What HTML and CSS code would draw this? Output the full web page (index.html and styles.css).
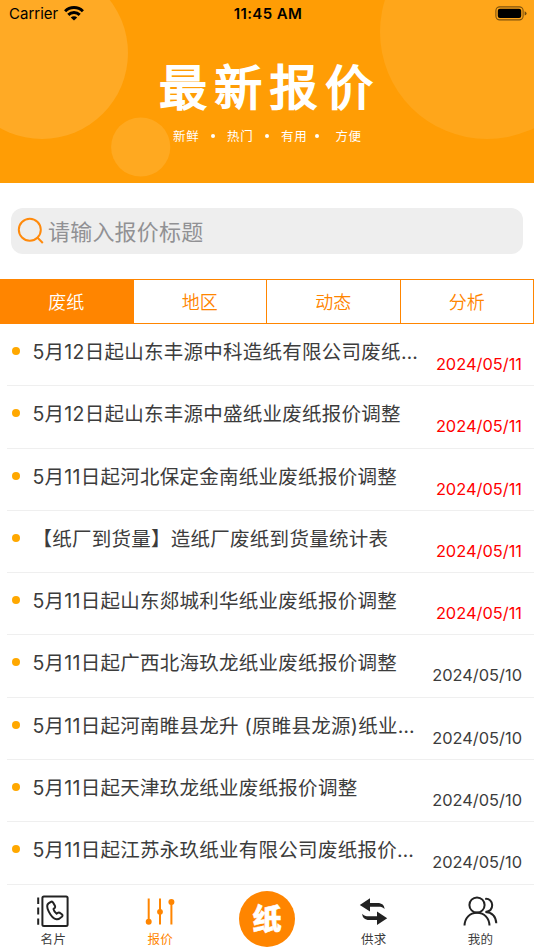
FILE: index.html
```html
<!DOCTYPE html>
<html lang="zh-CN">
<head>
    <meta charset="UTF-8">
    <meta name="viewport" content="width=device-width, initial-scale=1.0">
    <title>最新报价</title>
    <link rel="stylesheet" href="styles.css">
</head>
<body>
    <div class="page">
        <header class="banner">
            <svg class="banner-bg" width="534" height="183" viewBox="0 0 534 183">
                <circle cx="42" cy="53" r="86" fill="#ffaa25"/>
                <circle cx="487" cy="32" r="107" fill="#ffa61a"/>
                <circle cx="140.7" cy="147" r="29.6" fill="#ffa920"/>
            </svg>
            <div class="status-bar">
                <div class="carrier">
                    <span>Carrier</span>
                    <svg width="20" height="15" viewBox="0 0 20 15">
                        <g fill="none" stroke="#000" stroke-width="3">
                            <path d="M1.1 5.2a12.7 12.7 0 0 1 17.8 0"/>
                            <path d="M4.3 8.9a8.2 8.2 0 0 1 11.4 0"/>
                        </g>
                        <path d="M10 14.6l-3.2-3.1a4.6 4.6 0 0 1 6.4 0z"/>
                    </svg>
                </div>
                <div class="time">11:45 AM</div>
                <div class="battery">
                    <svg width="32" height="15" viewBox="0 0 32 15">
                        <rect x=".9" y=".9" width="27.2" height="13" rx="3.8" fill="none" stroke="#000" stroke-opacity=".5" stroke-width="1.1"/>
                        <rect x="2.8" y="2.7" width="23.4" height="9.4" rx="2"/>
                        <path d="M29.6 5.2q2 .8 2 2.2t-2 2.2z" fill-opacity=".55"/>
                    </svg>
                </div>
            </div>
            <h1>最新报价</h1>
            <div class="slogan">
                <span>新鲜</span><i></i><span>热门</span><i></i><span>有用</span><i></i><span>方便</span>
            </div>
        </header>

        <div class="search">
            <svg width="28" height="28" viewBox="0 0 28 28" fill="none" stroke="#ff8a0c" stroke-width="2">
                <circle cx="12.8" cy="12.8" r="11"/>
                <path d="M20.6 20.8l5.2 5.2"/>
            </svg>
            <span>请输入报价标题</span>
        </div>

        <nav class="tabs">
            <div class="tab active">废纸</div>
            <div class="tab">地区</div>
            <div class="tab">动态</div>
            <div class="tab">分析</div>
        </nav>

        <ul class="list">
            <li><p>5月12日起山东丰源中科造纸有限公司废纸…</p><time class="new">2024/05/11</time></li>
            <li><p>5月12日起山东丰源中盛纸业废纸报价调整</p><time class="new">2024/05/11</time></li>
            <li><p>5月11日起河北保定金南纸业废纸报价调整</p><time class="new">2024/05/11</time></li>
            <li><p>【纸厂到货量】造纸厂废纸到货量统计表</p><time class="new">2024/05/11</time></li>
            <li><p>5月11日起山东郯城利华纸业废纸报价调整</p><time class="new">2024/05/11</time></li>
            <li><p>5月11日起广西北海玖龙纸业废纸报价调整</p><time>2024/05/10</time></li>
            <li><p>5月11日起河南睢县龙升 (原睢县龙源)纸业…</p><time>2024/05/10</time></li>
            <li><p>5月11日起天津玖龙纸业废纸报价调整</p><time>2024/05/10</time></li>
            <li><p>5月11日起江苏永玖纸业有限公司废纸报价…</p><time>2024/05/10</time></li>
        </ul>

        <footer class="tabbar">
            <div class="item">
                <svg width="34" height="34" viewBox="0 0 34 34" fill="none" stroke="#222" stroke-width="2">
                    <rect x="6.4" y="2.6" width="25.2" height="29.4" rx="1.5"/>
                    <path d="M2.2 3.4v6.6M2.2 13.6v7M2.2 24.4v6.4"/>
                    <path d="M14.9 7.9l-2.4 1.5c-2 1.500-1.300 5 .3 8.200 2 4 5 7.400 7.700 7.700 2 .3 4-1.200 5.500-2.700.8-.9.6-1.700-.2-2.400l-2.300-1.600c-1.100-.6-1.900.4-2.900 1.100-1.400-.9-2.700-2.900-3.100-4.700l1.400-1.300c.5-.6.3-1.300 0-2l-1.700-3c-.6-1-1.300-1.400-2.300-.8z" stroke-linejoin="round"/>
                </svg>
                <span>名片</span>
            </div>
            <div class="item current">
                <svg width="34" height="34" viewBox="0 0 34 34" fill="#ff8500" stroke="#ff8500" stroke-width="2">
                    <path d="M5.700 4.500v24M17 4.500v26M28.400 6v24.500"/>
                    <circle cx="5.700" cy="27.700" r="2"/>
                    <circle cx="17" cy="17.800" r="1.900"/>
                    <circle cx="28.400" cy="8" r="2"/>
                </svg>
                <span>报价</span>
            </div>
            <div class="item center">
                <div class="logo">纸</div>
            </div>
            <div class="item">
                <svg width="34" height="34" viewBox="0 0 34 34" fill="#222">
                    <path d="M2.800 11L13 4.200V9h7.500c4.500 0 7 2.200 7 6-1.400-1.700-3.200-2.200-6-2.200H13v4.700z"/>
                    <path d="M30.200 24.300L20 17.600v4.700h-8.200c-3 0-5-.5-6.500-2.500 0 3.900 2.500 6.300 7 6.300H20v4.900z"/>
                </svg>
                <span>供求</span>
            </div>
            <div class="item">
                <svg width="36" height="34" viewBox="0 0 36 34" fill="none" stroke="#222" stroke-width="2">
                    <circle cx="14" cy="11" r="7.600"/>
                    <path d="M1.500 31.500c.3-7.400 5.200-12.800 12.500-12.800s12.200 5.400 12.500 12.800"/>
                    <path d="M22.200 4.900c4.200-.4 7 2.500 7 6.200 0 3.600-2.300 6.500-6.800 6.800 6.300.4 10.400 4.300 10.900 11.300"/>
                </svg>
                <span>我的</span>
            </div>
        </footer>
    </div>
</body>
</html>
```

FILE: styles.css
```css
* {
    box-sizing: border-box;
}

body {
    margin: 0;
    background: #fff;
    font-family: Inter, "Noto Sans CJK SC", sans-serif;
    color: #3c3c3c;
}

.page {
    width: 534px;
    height: 950px;
    overflow: hidden;
    display: flex;
    flex-direction: column;
}

.banner {
    position: relative;
    height: 183px;
    background: #ff9d05;
    flex: none;
}

.banner-bg {
    position: absolute;
    left: 0;
    top: 0;
}

.status-bar {
    position: relative;
    display: grid;
    grid-template-columns: 1fr auto 1fr;
    align-items: center;
    height: 27px;
    padding: 0 7px 0 9px;
    color: #000;
    font-size: 15px;
}

.carrier {
    display: flex;
    align-items: center;
    gap: 6px;
}

.time {
    font-weight: 600;
    letter-spacing: 0.4px;
}

.battery {
    display: flex;
    justify-content: flex-end;
}

.banner h1 {
    position: relative;
    margin: 32px 0 0;
    padding-left: 159px;
    font-size: 48px;
    line-height: 58px;
    font-weight: 400;
    letter-spacing: 7.3px;
    color: #fff;
    -webkit-text-stroke: 1.8px #fff;
}

.slogan {
    position: relative;
    display: flex;
    align-items: center;
    margin-top: 8px;
    padding-left: 173px;
    height: 20px;
    font-size: 12.5px;
    letter-spacing: 0.7px;
    color: #fff;
}

.slogan i {
    width: 4px;
    height: 4px;
    margin: 2px 11.8px 0;
    border-radius: 50%;
    background: #fff;
}

.slogan i:last-of-type {
    margin: 2px 16px 0 8px;
}

.search {
    display: flex;
    align-items: center;
    flex: none;
    gap: 3px;
    height: 46px;
    margin: 25px 11px 25px;
    padding-left: 6px;
    border-radius: 12px;
    background: #eee;
    color: #919194;
    font-size: 22px;
    letter-spacing: 0.2px;
}

.search span {
    margin-top: -2px;
}

.tabs {
    display: grid;
    grid-template-columns: repeat(4, 1fr);
    flex: none;
    height: 45px;
    border: solid #ff8500;
    border-width: 1px 0;
}

.tab {
    display: flex;
    align-items: center;
    justify-content: center;
    padding-bottom: 1px;
    color: #ff8500;
    font-size: 18px;
    font-weight: 350;
    border-right: 1px solid #ff8500;
}

.tab.active {
    background: #ff8500;
    color: #fff;
}

.list {
    margin: 0;
    padding: 0 0 0 7px;
    list-style: none;
}

.list li {
    display: flex;
    height: 62.3px;
    padding: 0 12px 0 4.5px;
    border-bottom: 1px solid #efefef;
    justify-content: space-between;
}

.list li::before {
    content: "";
    flex: none;
    width: 8px;
    height: 8px;
    margin-top: 23px;
    border-radius: 50%;
    background: #ffa800;
}

.list p {
    flex: 1;
    margin: 13px 0 0 13px;
    font-size: 19.5px;
    line-height: 30px;
    letter-spacing: 0.26px;
    white-space: nowrap;
}

.list time {
    margin-top: 29px;
    font-size: 16.4px;
    line-height: 23px;
}

.list .new {
    color: #f00;
}

.tabbar {
    display: grid;
    grid-template-columns: repeat(5, 1fr);
    flex: 1;
}

.item {
    display: flex;
    flex-direction: column;
    align-items: center;
    padding-top: 9px;
    font-size: 12.5px;
    line-height: 18px;
    letter-spacing: 0.3px;
}

.item svg {
    flex: none;
}

.item span {
    margin-top: 3px;
}

.item.current {
    color: #ff8500;
}

.item.center {
    padding-top: 6px;
}

.logo {
    width: 56px;
    height: 56px;
    border-radius: 50%;
    background: #ff8500;
    color: #fff;
    font-size: 29px;
    font-weight: 900;
    line-height: 58px;
    letter-spacing: 0;
    text-align: center;
    -webkit-text-stroke: 0.5px #fff;
}
```
